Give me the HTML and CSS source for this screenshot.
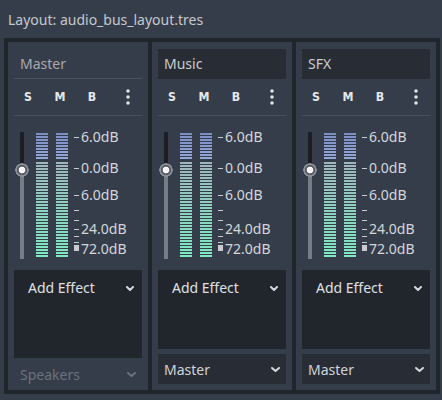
FILE: index.html
```html
<!DOCTYPE html>
<html>
<head>
<meta charset="utf-8">
<link rel="stylesheet" href="styles.css">
</head>
<body>
<div class="title">Layout: audio_bus_layout.tres</div>
<div class="buses">
  <div class="bus">
    <div class="name flat">Master</div>
    <div class="btns">
      <span class="btn">S</span><span class="btn">M</span><span class="btn">B</span><span class="spacer"></span>
      <span class="more"><svg width="4" height="16" viewBox="0 0 4 16"><circle cx="2" cy="2" r="1.8"/><circle cx="2" cy="8" r="1.8"/><circle cx="2" cy="14" r="1.8"/></svg></span>
    </div>
    <div class="sep"></div>
    <div class="meter">
      <div class="slider"><div class="track-top"></div><div class="track-bot"></div><div class="grab"></div></div>
      <div class="bar first"><div class="seg-hi"></div><div class="seg-lo"></div></div>
      <div class="bar"><div class="seg-hi"></div><div class="seg-lo"></div></div>
      <div class="scale">
        <span class="tick" style="top:6px"></span><span class="lbl" style="top:-4px">6.0dB</span>
        <span class="tick" style="top:37px"></span><span class="lbl" style="top:27px">0.0dB</span>
        <span class="tick" style="top:64px"></span><span class="lbl" style="top:54px">6.0dB</span>
        <span class="tick" style="top:79px"></span>
        <span class="tick" style="top:89px"></span>
        <span class="tick" style="top:98px"></span><span class="lbl" style="top:88px">24.0dB</span>
        <span class="tick" style="top:105px"></span>
        <span class="tick" style="top:111px"></span>
        <span class="sq" style="top:114px"></span><span class="lbl" style="top:108px">72.0dB</span>
      </div>
    </div>
    <div class="effects"><div class="add"><span>Add Effect</span><svg class="chev" width="8" height="5" viewBox="0 0 8 5"><polyline points="1,1 4,4 7,1"/></svg></div></div>
    <div class="out disabled"><span>Speakers</span><svg class="chev" width="9" height="5" viewBox="0 0 9 5"><polyline points="1,1 4.5,4 8,1"/></svg></div>
  </div>

  <div class="bus">
    <div class="name">Music</div>
    <div class="btns">
      <span class="btn">S</span><span class="btn">M</span><span class="btn">B</span><span class="spacer"></span>
      <span class="more"><svg width="4" height="16" viewBox="0 0 4 16"><circle cx="2" cy="2" r="1.8"/><circle cx="2" cy="8" r="1.8"/><circle cx="2" cy="14" r="1.8"/></svg></span>
    </div>
    <div class="sep"></div>
    <div class="meter">
      <div class="slider"><div class="track-top"></div><div class="track-bot"></div><div class="grab"></div></div>
      <div class="bar first"><div class="seg-hi"></div><div class="seg-lo"></div></div>
      <div class="bar"><div class="seg-hi"></div><div class="seg-lo"></div></div>
      <div class="scale">
        <span class="tick" style="top:6px"></span><span class="lbl" style="top:-4px">6.0dB</span>
        <span class="tick" style="top:37px"></span><span class="lbl" style="top:27px">0.0dB</span>
        <span class="tick" style="top:64px"></span><span class="lbl" style="top:54px">6.0dB</span>
        <span class="tick" style="top:79px"></span>
        <span class="tick" style="top:89px"></span>
        <span class="tick" style="top:98px"></span><span class="lbl" style="top:88px">24.0dB</span>
        <span class="tick" style="top:105px"></span>
        <span class="tick" style="top:111px"></span>
        <span class="sq" style="top:114px"></span><span class="lbl" style="top:108px">72.0dB</span>
      </div>
    </div>
    <div class="effects"><div class="add"><span>Add Effect</span><svg class="chev" width="8" height="5" viewBox="0 0 8 5"><polyline points="1,1 4,4 7,1"/></svg></div></div>
    <div class="out"><span>Master</span><svg class="chev" width="9" height="5" viewBox="0 0 9 5"><polyline points="1,1 4.5,4 8,1"/></svg></div>
  </div>

  <div class="bus">
    <div class="name">SFX</div>
    <div class="btns">
      <span class="btn">S</span><span class="btn">M</span><span class="btn">B</span><span class="spacer"></span>
      <span class="more"><svg width="4" height="16" viewBox="0 0 4 16"><circle cx="2" cy="2" r="1.8"/><circle cx="2" cy="8" r="1.8"/><circle cx="2" cy="14" r="1.8"/></svg></span>
    </div>
    <div class="sep"></div>
    <div class="meter">
      <div class="slider"><div class="track-top"></div><div class="track-bot"></div><div class="grab"></div></div>
      <div class="bar first"><div class="seg-hi"></div><div class="seg-lo"></div></div>
      <div class="bar"><div class="seg-hi"></div><div class="seg-lo"></div></div>
      <div class="scale">
        <span class="tick" style="top:6px"></span><span class="lbl" style="top:-4px">6.0dB</span>
        <span class="tick" style="top:37px"></span><span class="lbl" style="top:27px">0.0dB</span>
        <span class="tick" style="top:64px"></span><span class="lbl" style="top:54px">6.0dB</span>
        <span class="tick" style="top:79px"></span>
        <span class="tick" style="top:89px"></span>
        <span class="tick" style="top:98px"></span><span class="lbl" style="top:88px">24.0dB</span>
        <span class="tick" style="top:105px"></span>
        <span class="tick" style="top:111px"></span>
        <span class="sq" style="top:114px"></span><span class="lbl" style="top:108px">72.0dB</span>
      </div>
    </div>
    <div class="effects"><div class="add"><span>Add Effect</span><svg class="chev" width="8" height="5" viewBox="0 0 8 5"><polyline points="1,1 4,4 7,1"/></svg></div></div>
    <div class="out"><span>Master</span><svg class="chev" width="9" height="5" viewBox="0 0 9 5"><polyline points="1,1 4.5,4 8,1"/></svg></div>
  </div>
</div>
</body>
</html>
```
FILE: styles.css
```css
html, body {
  margin: 0;
  padding: 0;
}
body {
  background: #363d4a;
  font-family: "Noto Sans", sans-serif;
  font-size: 14px;
  color: #c9ccd2;
  width: 442px;
  height: 400px;
  overflow: hidden;
}
.title {
  height: 38px;
  box-sizing: border-box;
  padding: 10px 0 0 8px;
  line-height: 20px;
  color: #c4c8ce;
}
.buses {
  margin: 0 2px 0 4px;
  height: 356px;
  box-sizing: border-box;
  background: #21252c;
  padding: 4px;
  display: flex;
  gap: 4px;
}
.bus {
  width: 140px;
  box-sizing: border-box;
  background: #363d4a;
  padding: 7px 6px 6px;
  display: flex;
  flex-direction: column;
}
.name {
  height: 30px;
  box-sizing: border-box;
  line-height: 30px;
  padding: 0 6px;
  background: #272c35;
  color: #c9ccd2;
}
.name.flat {
  background: none;
  border-bottom: 1px solid #4b5261;
  line-height: 29px;
  color: #a6aab1;
}
.btns {
  display: flex;
  align-items: center;
  height: 28px;
  margin: 4px 0 0 -2px;
}
.btn {
  width: 32px;
  text-align: center;
  font-family: "DejaVu Sans", sans-serif;
  font-weight: 700;
  font-size: 13px;
  line-height: 28px;
  color: #e6e7e9;
  transform: scaleX(0.85);
}
.spacer {
  flex: 1;
}
.more {
  width: 28px;
  display: flex;
  justify-content: center;
  fill: #e0e1e3;
}
.sep {
  height: 1px;
  margin-top: 4px;
  background: #49505e;
}
.meter {
  margin-top: 15px;
  height: 129px;
  display: flex;
}
.slider {
  position: relative;
  margin: 1px 0 0 6px;
  width: 4px;
  height: 127px;
  display: flex;
  flex-direction: column;
}
.track-top {
  height: 38px;
  background: #1b1e24;
}
.track-bot {
  flex: 1;
  background: #777c86;
}
.grab {
  position: absolute;
  left: -5px;
  top: 31px;
  width: 14px;
  height: 14px;
  border-radius: 50%;
  background: radial-gradient(circle closest-side, #f6f6f6 0 44%, #585d67 52% 70%, #8b9099 76% 94%, rgba(139,144,153,0) 100%);
}
.bar {
  width: 12px;
  margin: 2px 0 0 8px;
  height: 125px;
  display: flex;
  flex-direction: column;
  gap: 3px;
}
.bar.first {
  margin-left: 12px;
}
.seg-hi {
  height: 26px;
  background:
    repeating-linear-gradient(to bottom, rgba(0,0,0,0) 0 2px, #363d4a 2px 3px),
    linear-gradient(to bottom, #7b8fc6, #93a6d8);
}
.seg-lo {
  flex: 1;
  background:
    repeating-linear-gradient(to bottom, rgba(0,0,0,0) 0 2px, #363d4a 2px 3px),
    linear-gradient(to bottom, #a0b5bc, #8fcfbf 45%, #7eebc1);
}
.scale {
  position: relative;
  margin-left: 6px;
  flex: 1;
}
.tick {
  position: absolute;
  left: 0;
  width: 5px;
  height: 1px;
  background: #c8ccd1;
}
.sq {
  position: absolute;
  left: 0;
  width: 5px;
  height: 6px;
  background: #c8ccd1;
}
.lbl {
  position: absolute;
  left: 7px;
  line-height: 20px;
  white-space: nowrap;
  color: #d3d6da;
}
.effects {
  margin-top: 10px;
  flex: 1;
  background: #21252c;
  padding: 8px 8px 0 14px;
}
.add {
  display: flex;
  justify-content: space-between;
  align-items: center;
  line-height: 20px;
  color: #dfe1e4;
}
.chev {
  fill: none;
  stroke: #d6d8dc;
  stroke-width: 2;
  stroke-linecap: round;
  stroke-linejoin: round;
}
.out {
  margin-top: 5px;
  height: 30px;
  box-sizing: border-box;
  background: #272c35;
  padding: 0 6px;
  display: flex;
  justify-content: space-between;
  align-items: center;
  color: #d0d3d8;
}
.out.disabled {
  background: none;
  height: 24px;
  margin-top: 2px;
  padding-top: 4px;
  color: #6b717c;
}
.out.disabled .chev {
  stroke: #6b717c;
}
```
